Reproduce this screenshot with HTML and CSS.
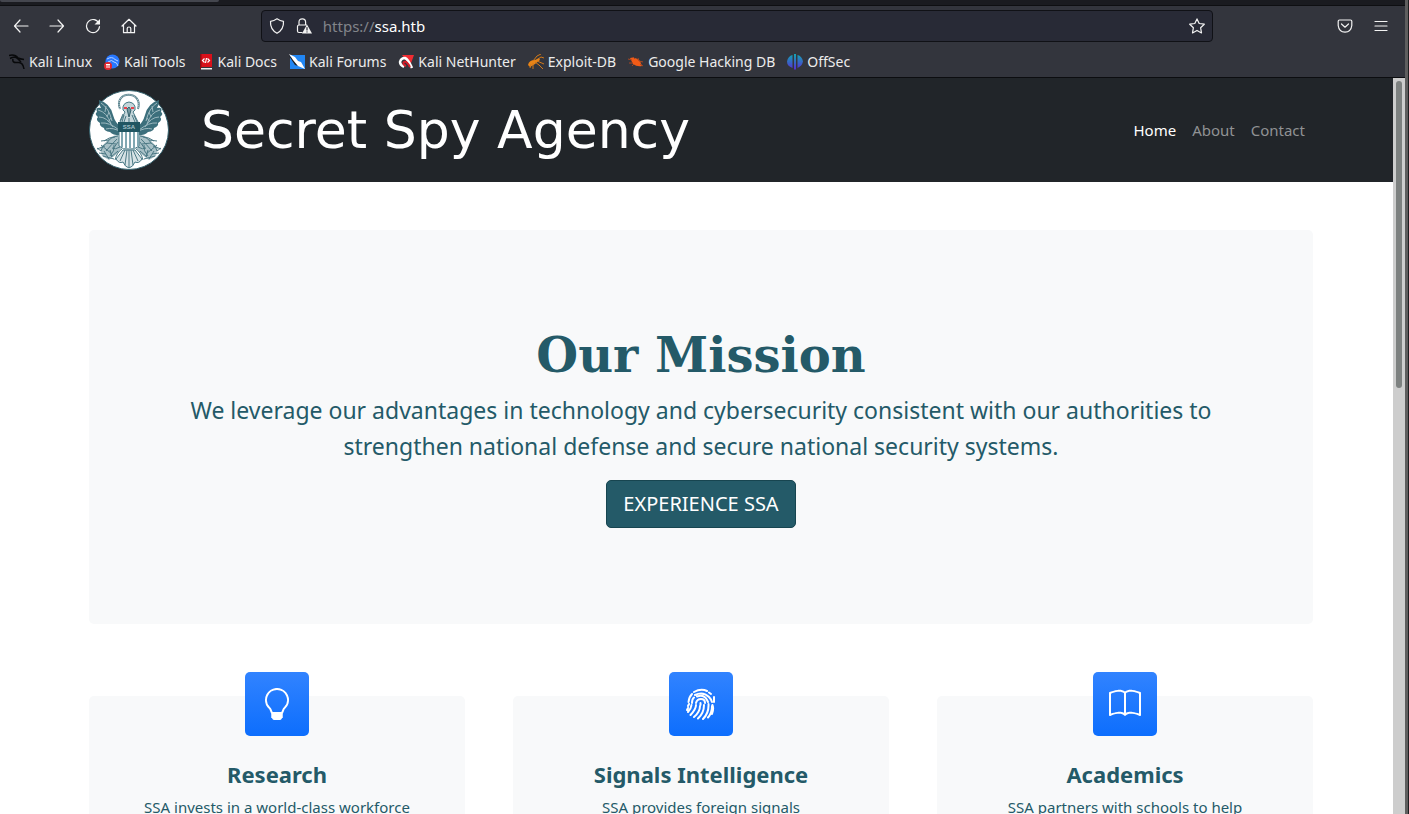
FILE: index.html
```html
<!DOCTYPE html>
<html lang="en">
<head>
  <meta charset="UTF-8">
  <meta name="viewport" content="width=device-width, initial-scale=1.0">
  <title>Secret Spy Agency</title>
  <link rel="stylesheet" href="styles.css">
</head>
<body>
  <div class="window">
    <!-- Browser chrome -->
    <header class="chrome">
      <div class="tab-strip"><div class="tab"></div></div>
      <div class="toolbar">
        <div class="nav-buttons">
          <button class="icon-btn" aria-label="Back">
            <svg viewBox="0 0 16 16"><path d="M15 8H1.500M7 2L1.500 8L7 14"/></svg>
          </button>
          <button class="icon-btn" aria-label="Forward">
            <svg viewBox="0 0 16 16"><path d="M1 8H14.500M9 2L14.500 8L9 14"/></svg>
          </button>
          <button class="icon-btn" aria-label="Reload">
            <svg viewBox="0 0 16 16"><path d="M14 5.500A6.500 6.500 0 1 0 14.500 8.500"/><path class="solid" d="M15 1V6.500H9.500Z"/></svg>
          </button>
          <button class="icon-btn" aria-label="Home">
            <svg viewBox="0 0 16 16"><path d="M1 8L8 1.300L15 8M2.500 7V14.700H13.500V7M6.200 14.500V10.500Q6.200 9 8 9T9.800 10.500V14.500"/></svg>
          </button>
        </div>
        <div class="url-bar">
          <svg class="icon" viewBox="0 0 16 16"><path d="M8 .8Q11 3 14.500 3.300Q15 11.500 8 15.300Q1 11.500 1.500 3.300Q5 3 8 .8Z"/></svg>
          <svg class="icon" viewBox="0 0 16 16"><path d="M6 14.500H3Q1.500 14.500 1.500 13V8.500Q1.500 7 3 7H10.500M3 7V4Q3 .8 6.300 .8T9.600 4V7"/><path class="solid" d="M11 6.500L16 15.500H6Z"/><path class="mark" d="M11 9.500V12M11 13.800V14"/></svg>
          <label class="url"><span class="scheme">https://</span><input type="text" value="ssa.htb" aria-label="Address"></label>
          <button class="star-btn" aria-label="Bookmark this page">
            <svg viewBox="0 0 16 16"><path d="M8 .9L10.200 5.500L15.300 6.200L11.600 9.700L12.500 14.900L8 12.400L3.500 14.900L4.400 9.700L.7 6.200L5.800 5.500Z"/></svg>
          </button>
        </div>
        <div class="menu-buttons">
          <button class="icon-btn" aria-label="Save to Pocket">
            <svg viewBox="0 0 16 16"><path d="M2.500 2H13.500Q14.800 2 14.800 3.300V7.500Q14 14 8 14.200Q2 14 1.200 7.500V3.300Q1.200 2 2.500 2ZM4.500 6L8 9.200L11.500 6"/></svg>
          </button>
          <button class="icon-btn" aria-label="Menu">
            <svg viewBox="0 0 16 16"><path d="M2 3.500H14M2 8H14M2 12.500H14"/></svg>
          </button>
        </div>
      </div>
      <nav class="bookmarks">
        <a href="#">
          <svg viewBox="0 0 16 16"><path fill="none" stroke="#08090b" stroke-width="1.500" d="M0 1.500Q6 0 9 4M1 4.500Q6 2 9 5M4 5Q3 9 8 8.500Q14 7.500 15 15M9 4Q11 5 15 5.500M9 5L12 8"/></svg>
          Kali Linux
        </a>
        <a href="#">
          <svg viewBox="0 0 16 16"><circle cx="8.500" cy="7.500" r="7" fill="#2777ff"/><path fill="none" stroke="#b9d4ff" d="M3 5Q8 2 11 5.500L14 7M4 8Q8 5 10 8Q13 8 14 12"/><circle cx="4" cy="12" r="4" fill="#e3262e"/><path fill="none" stroke="#fff" d="M2 10.500H6M3 10.500V14M5 10.500V14"/></svg>
          Kali Tools
        </a>
        <a href="#">
          <svg viewBox="0 0 16 16"><path fill="#d9101a" d="M2 0H14V13H2Z"/><path fill="#8f0b12" d="M2 0H3.500V15H2Z"/><path fill="#eee" d="M3 14H14V15.500H3Z"/><path fill="none" stroke="#fff" stroke-width="1.200" d="M6.500 4.500L4.500 6.500L6.500 8.500M9.500 4.500L11.500 6.500L9.500 8.500M8.500 4L7.500 9"/></svg>
          Kali Docs
        </a>
        <a href="#">
          <svg viewBox="0 0 16 16"><path fill="#2186f4" d="M1 1H16V15H1Z"/><path fill="#1c2028" d="M0 2L3 3L9 12L6 11Z"/><path fill="#fff" d="M0 0L6 3L9 7L12 8L16 15L9 12L4 6Z"/></svg>
          Kali Forums
        </a>
        <a href="#">
          <svg viewBox="0 0 16 16"><path fill="#f12c32" d="M4 1H16L12 12Z"/><path fill="none" stroke="#fff" stroke-width="2.500" d="M6 13Q2 11 2 8Q3 4 7 4Q10 5 14 14"/><path fill="none" stroke="#d61b28" stroke-width="2" d="M12 13Q9 7 6 8Q4 10 8 12"/></svg>
          Kali NetHunter
        </a>
        <a href="#">
          <svg viewBox="0 0 16 16"><path fill="#e98416" d="M0 11Q1 6 7 6L11 4L12 6L7 10L2 13Z"/><path fill="none" stroke="#d27919" d="M5 7L9 2L13 0M10 5L13 3L16 4M9 7L16 10M7 8L11 11L15 15M5 9L5 15M3 10L2 14"/></svg>
          Exploit-DB
        </a>
        <a href="#">
          <svg viewBox="0 0 16 16"><path fill="#f15b17" d="M2 4Q7 2 12 7L14 12Q9 13 5 10Z"/><path fill="none" stroke="#a94722" d="M0 5L4 6M1 9H5M5 3L7 5M10 4L11 7L15 8M12 10L15 12M6 10L4 12"/></svg>
          Google Hacking DB
        </a>
        <a href="#">
          <svg viewBox="0 0 16 16"><defs><linearGradient id="offsec" gradientUnits="userSpaceOnUse" x1="0" y1="0" x2="0" y2="16"><stop stop-color="#12a6b3"/><stop offset="1" stop-color="#5929d6"/></linearGradient></defs><path fill="url(#offsec)" d="M5.500 1V14Q0 12 0 7.500Q1 2 5.500 1ZM7 0H9V15.500H7ZM10.500 1Q15 2 16 7.500Q15 12 10.500 14Z"/></svg>
          OffSec
        </a>
      </nav>
    </header>

    <div class="viewport">
      <div class="page">
        <!-- Site header -->
        <div class="site-header">
          <div class="container header-inner">
            <a class="brand" href="#">
              <svg class="seal" viewBox="0 0 80 80">
                <defs>
                  <g id="wing">
                    <path fill="#3c6f7c" d="M33 38Q26 33 24 25Q21 13 10 10Q10 15 12 18Q6 17 8 22Q5 24 9 27Q6 30 11 33Q10 36 15 38Q15 41 21 42Q25 46 33 45Z"/>
                    <path class="feather" d="M12 13Q20 18 23 31M9 20Q18 22 22 34M10 27Q18 27 24 37M12 33Q20 32 30 40M17 39Q24 37 32 42M17 16L16 22M20 22L18 27M22 28L19 32"/>
                    <path fill="#a9c1c7" d="M29 45Q22 45 17 52L11 58L13 66L20 70L28 64L33 58Z"/>
                    <path class="line" d="M29 46Q21 47 18 53Q13 55 12 61M28 49Q23 54 17 61M18 53L27 54M20 50L12 51M16 56L8 59M21 60L23 67M12 61L8 58M15 61L20 69M25 55Q26 61 21 66M29 52L24 59M15 51Q20 47 26 47M12 55L23 64M10 63L17 64M14 66L25 69"/>
                    <path class="line" d="M33 59Q28 62 26 70M31 57Q26 60 23 58M29 61L22 67"/>
                  </g>
                </defs>
                <circle cx="40" cy="40" r="39.500" fill="#fff" stroke="#34616d"/>
                <use href="#wing"/>
                <use href="#wing" transform="translate(80) scale(-1 1)"/>
                <path fill="none" stroke="#5a838e" stroke-width="2" d="M31 19C24 0 55 0 49 19"/>
                <path fill="none" stroke="#c4d5d9" stroke-dasharray="1 1" d="M31 19C24 0 55 0 49 19"/>
                <path fill="#c5d6da" stroke="#477985" d="M34 20Q33 13 40 12Q47 13 46 20L44 22L50 34H30L36 22Z"/>
                <path fill="#7598a1" stroke="#34616d" d="M38 19L40 17L42 20L40 27Z"/>
                <path fill="none" stroke="#e8444e" stroke-width="2" d="M35 18H38M42 18H45"/>
                <path class="line" d="M34 24L31 31M37 26L35 32M43 25L46 32M40 28V33M35 25L33 32M45 25L48 32"/>
                <path fill="#fff" stroke="#477985" d="M30 41H50V56Q46 60 40 59Q34 60 30 56Z"/>
                <path stroke="#81a8b2" stroke-width="2" d="M33 41V57M37 41V58M41 41V58M45 41V58M49 41V56"/>
                <path fill="#205662" d="M29 32H51V42H29Z"/>
                <text x="40" y="39" class="seal-text">SSA</text>
                <path fill="#d7e3e6" stroke="#477985" d="M34 60L27 69Q30 74 34 72Q36 77 40 78Q44 77 46 72Q50 74 53 69L46 60Z"/>
                <path class="line" d="M36 60L31 71M38 60L36 75M40 60V78M42 60L44 75M44 60L49 71"/>
              </svg>
              <span class="brand-name">Secret Spy Agency</span>
            </a>
            <nav class="site-nav">
              <a class="active" href="#">Home</a>
              <a href="#">About</a>
              <a href="#">Contact</a>
            </nav>
          </div>
        </div>

        <main class="container">
          <section class="mission">
            <h1>Our Mission</h1>
            <p>We leverage our advantages in technology and cybersecurity consistent with our authorities to strengthen national defense and secure national security systems.</p>
            <a class="cta" href="#">EXPERIENCE SSA</a>
          </section>

          <section class="cards">
            <article class="card">
              <div class="feature">
                <svg viewBox="0 0 16 16"><path d="M2 6a6 6 0 1 1 10.174 4.310c-.203.196-.359.400-.453.619l-.762 1.769A.5.5 0 0 1 10.500 13a.5.5 0 0 1 0 1 .5.5 0 0 1 0 1l-.224.447a1 1 0 0 1-.894.553H6.618a1 1 0 0 1-.894-.553L5.500 15a.5.5 0 0 1 0-1 .5.5 0 0 1 0-1 .5.5 0 0 1-.46-.302l-.761-1.770a2 2 0 0 0-.453-.618A5.980 5.980 0 0 1 2 6m6-5a5 5 0 0 0-3.479 8.592c.263.254.514.564.676.941L5.830 12h4.342l.632-1.467c.162-.377.413-.687.676-.941A5 5 0 0 0 8 1"/></svg>
              </div>
              <h2>Research</h2>
              <p>SSA invests in a world-class workforce</p>
            </article>
            <article class="card">
              <div class="feature">
                <svg class="print" viewBox="0 0 32 32"><path d="M9 4Q16 0 22 3M24 4.500L26 6M3.500 14Q4 9 7 6M10 7Q18 3 24 9Q26 11 27 14M29 9V14M3 18L4 16M7 15Q7 11 9 9.500M12 8.500Q19 6 22 12L23 14M11 15Q12 11 16 11Q20 11 20 15M15.500 15V17M27.500 17Q29 21 27 26M6.500 17Q6 21 3 24M11 17Q11 21 5.500 27M15 18Q15 24 9 29M19 17Q19 25 13 30.500M23.500 16Q24 25 18 31M27 18Q27 25 23 29.500M3 20L2 22"/></svg>
              </div>
              <h2>Signals Intelligence</h2>
              <p>SSA provides foreign signals</p>
            </article>
            <article class="card">
              <div class="feature">
                <svg viewBox="0 0 16 16"><path d="M1 2.828c.885-.370 2.154-.769 3.388-.893 1.330-.134 2.458.063 3.112.752v9.746c-.935-.530-2.120-.603-3.213-.493-1.180.120-2.370.461-3.287.811zm7.500-.141c.654-.689 1.782-.886 3.112-.752 1.234.124 2.503.523 3.388.893v9.923c-.918-.350-2.107-.692-3.287-.810-1.094-.111-2.278-.039-3.213.492zM8 1.783C7.015.936 5.587.810 4.287.940c-1.514.153-3.042.672-3.994 1.105A.5.5 0 0 0 0 2.500v11a.5.5 0 0 0 .707.455c.882-.400 2.303-.881 3.680-1.020 1.409-.142 2.590.087 3.223.877a.5.5 0 0 0 .780 0c.633-.790 1.814-1.019 3.222-.877 1.378.139 2.800.620 3.681 1.020A.5.5 0 0 0 16 13.500v-11a.5.5 0 0 0-.293-.455c-.952-.433-2.480-.952-3.994-1.105C10.413.809 8.985.936 8 1.783"/></svg>
              </div>
              <h2>Academics</h2>
              <p>SSA partners with schools to help</p>
            </article>
          </section>
        </main>
      </div>
      <div class="scroll-track"><div class="scroll-thumb"></div></div>
    </div>
  </div>
</body>
</html>
```

FILE: styles.css
```css
* {
  box-sizing: border-box;
}
body {
  margin: 0;
  background: #1d1e20;
  font-family: "Noto Sans", sans-serif;
  font-size: 15px;
  line-height: 24px;
  color: #245a68;
}
a {
  color: inherit;
  text-decoration: none;
}
button {
  border: none;
  background: none;
  padding: 0;
  color: inherit;
}
svg {
  display: block;
}
.window {
  display: flex;
  flex-direction: column;
  height: 100vh;
  margin-right: 1px;
  border-right: 3px solid #5e5e5e;
  overflow: hidden;
}

/* Browser chrome */
.chrome {
  flex: none;
  background: #33353d;
  border-bottom: 1px solid #0c0d10;
  color: #ececec;
}
.tab-strip {
  height: 6px;
  background: #1a1b20;
  border-bottom: 1px solid #0e0f12;
}
.tab {
  width: 219px;
  height: 2px;
  background: #44464e;
  border-radius: 0 0 4px 4px;
}
.toolbar {
  display: flex;
  align-items: center;
  height: 40px;
  padding: 0 16px 0 13px;
}
.nav-buttons,
.menu-buttons {
  display: flex;
  gap: 20px;
}
.icon-btn,
.star-btn,
.icon {
  width: 16px;
  height: 16px;
  flex: none;
}
.toolbar svg {
  width: 16px;
  height: 16px;
  fill: none;
  stroke: #f3f3f3;
  stroke-width: 1.2;
  stroke-linecap: round;
  stroke-linejoin: round;
}
.toolbar .solid {
  fill: #f3f3f3;
  stroke: none;
}
.toolbar .mark {
  stroke: #282a36;
}
.url-bar {
  display: flex;
  align-items: center;
  flex: 1;
  gap: 11px;
  height: 32px;
  margin: 0 9%;
  padding: 0 7px;
  background: #282a36;
  border: 1px solid #101116;
  border-radius: 4px;
}
.url {
  display: flex;
  flex: 1;
}
.scheme {
  color: #82848a;
}
.url input {
  flex: 1;
  min-width: 0;
  padding: 0;
  border: none;
  background: none;
  font: inherit;
  color: #fff;
}
.bookmarks {
  display: flex;
  gap: 12px;
  height: 31px;
  padding: 0 9px;
  font-size: 14px;
  line-height: 31px;
  white-space: nowrap;
}
.bookmarks a {
  display: flex;
  align-items: center;
  gap: 4px;
}
.bookmarks svg {
  width: 16px;
  height: 16px;
}

/* Page */
.viewport {
  display: flex;
  flex: 1;
  min-height: 0;
}
.page {
  flex: 1;
  overflow: hidden;
  background: #fff;
}
.container {
  max-width: 1224px;
  margin: 0 80px 0 89px;
}
.scroll-track {
  width: 12px;
  padding: 3px;
  background: #cdcdcd;
}
.scroll-thumb {
  height: 42%;
  border-radius: 3px;
  background: #7d8180;
}
.site-header {
  background: #212529;
}
.header-inner {
  display: flex;
  align-items: center;
  justify-content: space-between;
  height: 104px;
}
.brand {
  display: flex;
  align-items: center;
  gap: 32px;
}
.seal {
  width: 80px;
  height: 80px;
}
.seal .line {
  fill: none;
  stroke: #4b7884;
}
.seal .feather {
  fill: none;
  stroke: #9db9c0;
}
.seal-text {
  font: bold 6px "Liberation Sans", sans-serif;
  fill: #a8c4cb;
  text-anchor: middle;
}
.brand-name {
  font-family: "DejaVu Sans", sans-serif;
  font-size: 52px;
  line-height: 64px;
  color: #fff;
}
.site-nav {
  display: flex;
  gap: 16px;
  padding-right: 8px;
  color: #909294;
}
.site-nav .active {
  color: #fff;
}
.mission {
  display: flex;
  flex-direction: column;
  align-items: center;
  margin-top: 48px;
  padding: 96px;
  background: #f8f9fa;
  border-radius: 5px;
  text-align: center;
}
.mission h1 {
  margin: 0 0 8px;
  font: bold 48px/58px "DejaVu Serif", serif;
}
.mission p {
  margin: 0 0 16px;
  font-size: 23px;
  line-height: 36px;
}
.cta {
  padding: 8px 16px;
  border: 1px solid #174550;
  border-radius: 5px;
  background: #245a68;
  color: #fff;
  font-size: 20px;
  line-height: 30px;
}
.cards {
  display: grid;
  grid-template-columns: repeat(3, 1fr);
  gap: 48px;
  margin-top: 72px;
}
.card {
  display: flex;
  flex-direction: column;
  align-items: center;
  padding: 0 48px 48px;
  background: #f8f9fa;
  border-radius: 5px;
  text-align: center;
}
.feature {
  display: flex;
  align-items: center;
  justify-content: center;
  width: 64px;
  height: 64px;
  margin: -24px 0 24px;
  border-radius: 5px;
  background: linear-gradient(#3183ff, #0d6efd);
}
.feature svg {
  width: 32px;
  height: 32px;
  fill: #fff;
}
.feature .print {
  fill: none;
  stroke: #fff;
  stroke-width: 2;
  stroke-linecap: round;
}
.card h2 {
  margin: 0 0 6px;
  font-size: 22px;
  line-height: 29px;
}
.card p {
  margin: 0;
}
```
